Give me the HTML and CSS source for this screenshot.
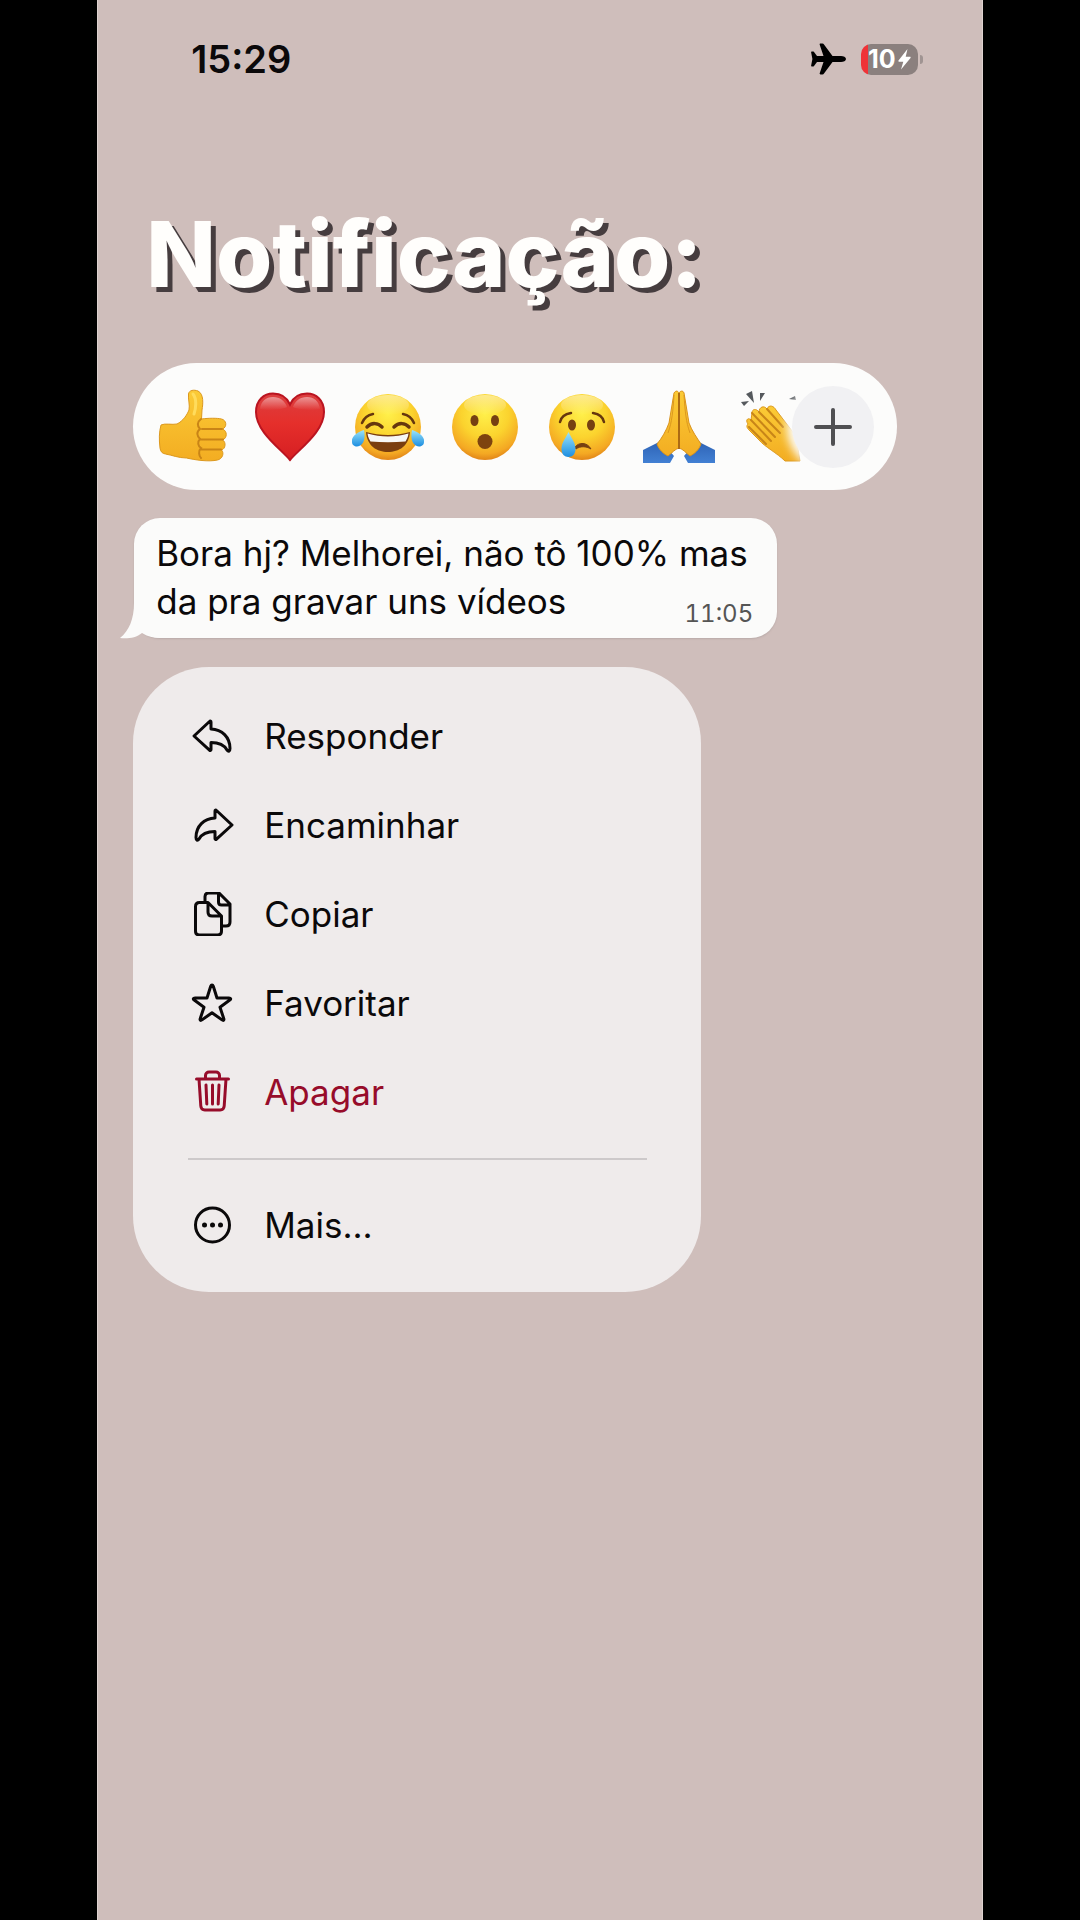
FILE: index.html
```
<!DOCTYPE html>
<html lang="pt-BR">
<head>
<meta charset="utf-8">
<meta name="viewport" content="width=device-width, initial-scale=1">
<title>Notificação</title>
<link rel="stylesheet" href="styles.css">
</head>
<body>
<main class="screen">
  <header class="status">
    <time class="clock">15:29</time>
    <div class="indicators">
      <svg class="plane" viewBox="0 0 36 32" aria-label="Modo avião"><path d="M35 16c0 2-2.500 3-5 3h-8.500L13 30.500c-.4.600-.8 1-1.500 1H9.500c-.7 0-1-.5-.8-1.200L12.500 19H6l-3 4c-.3.400-.6.500-1 .5H.800c-.5 0-.8-.3-.7-.8L1.400 16 .1 9.300C0 8.800.3 8.500.8 8.500H2c.4 0 .7.100 1 .5l3 4h6.500L8.700 1.700C8.500 1 8.800.5 9.500.5h2c.7 0 1.100.4 1.500 1L21.500 13H30c2.500 0 5 1 5 3z"/></svg>
      <div class="battery">
        <span class="level">10</span>
        <svg class="bolt" viewBox="0 0 13 21" aria-hidden="true"><path d="M9.500 0 .5 11.500c-.4.600-.1 1.200.6 1.200h4.200L3 20.500 12.500 9c.4-.6.100-1.200-.6-1.200H7.700z"/></svg>
      </div>
    </div>
  </header>

  <h1 class="title">Notificação:</h1>

  <section class="reactions" aria-label="Reações">
    <svg class="defs" width="0" height="0" aria-hidden="true">
      <defs>
        <radialGradient id="face" cx=".5" cy=".3" r=".72"><stop offset="0" stop-color="#fff04a"/><stop offset=".5" stop-color="#fbd32e"/><stop offset=".84" stop-color="#f4a823"/><stop offset="1" stop-color="#dd7e16"/></radialGradient>
        <linearGradient id="shine" x2="0" y2="1"><stop offset="0" stop-color="#fff" stop-opacity=".45"/><stop offset="1" stop-color="#fff" stop-opacity="0"/></linearGradient>
        <linearGradient id="heart" x2="0" y2="1"><stop offset="0" stop-color="#dc3f40"/><stop offset=".45" stop-color="#e52f2b"/><stop offset="1" stop-color="#d61e22"/></linearGradient>
        <linearGradient id="skin" x2="0" y2="1"><stop offset="0" stop-color="#fbcb36"/><stop offset="1" stop-color="#f3ad22"/></linearGradient>
        <linearGradient id="tear" x2="0" y2="1"><stop offset="0" stop-color="#9be4fb"/><stop offset="1" stop-color="#1c8ee0"/></linearGradient>
        <linearGradient id="sleeve" x2="0" y2="1"><stop offset="0" stop-color="#2d62b4"/><stop offset="1" stop-color="#4280d3"/></linearGradient>
      </defs>
    </svg>
    <button class="emoji" type="button" aria-label="Gostei">
      <svg viewBox="0 0 72 76">
        <path d="M3 36c4-2 11 0 16-1 6-3 10-9 12-14 1-5-1-11-.5-16C31 1 36 .5 40 2c6 3 5 13 4 19l-.5 9c7-1 16-1 20 0 5 1 6 8 1 10 5 2 5 9 0 11 4 2 3 9-1 10 3 3 1 9-4 10-9 2-22 0-31-2-8 0-15-3-21-4-3-.5-5-2-5.500-6-1-8-1-16 1-23z" fill="url(#skin)" stroke="#dc981d"/>
        <path d="M43 30c-4 3-4 7-1 10-4 3-3 7 0 10-3 3-2 7 1 9-3 3-2 8 0 10M44 40h20M43 50.500h22M43 60.500h20" fill="none" stroke="#c98416" stroke-width="2" stroke-linecap="round"/>
        <path d="M35 5c4 5 3 14 1 20" fill="none" stroke="#ffdc5c" stroke-width="3" stroke-linecap="round"/>
      </svg>
    </button>
    <button class="emoji" type="button" aria-label="Coração">
      <svg viewBox="0 0 72 76">
        <path d="M35 71C26 60 1 43 1 23 1 11 9 4.500 18 4.500c8 0 14 4 17 11 3-7 9-11 17-11 9 0 17 6.500 17 18.500 0 20-25 37-34 48z" fill="url(#heart)" stroke="#ba1420" stroke-width="2"/>
        <path d="M5 20C6 12 11 8 18 8c7 0 12 4 14 10-6 3-20 4-27 2zM65 20C64 12 59 8 52 8c-7 0-12 4-14 10 6 3 20 4 27 2z" fill="url(#shine)"/>
      </svg>
    </button>
    <button class="emoji" type="button" aria-label="Rindo">
      <svg viewBox="0 0 72 76">
        <circle cx="36" cy="38" r="33" fill="url(#face)"/><ellipse cx="36" cy="16" rx="21" ry="10" fill="url(#shine)"/>
        <path d="M10 34c2-5 6-8 11-9M62 34c-2-5-6-8-11-9" fill="none" stroke="#66370e" stroke-width="2.500" stroke-linecap="round"/>
        <path d="M15 38c5-5 11-4 15 0M42 38c5-5 11-4 15 0" fill="none" stroke="#66370e" stroke-width="3.500" stroke-linecap="round"/>
        <path d="M14 43c14 4 30 4 44 0-1 14-11 20-22 20S15 57 14 43z" fill="#7a3e0f"/>
        <path d="M15.500 44.500c13 4 28 4 41 0-.5 4-2 6-3 8-12 1-23 1-35 0-1-2-2.500-4-3-8z" fill="#f7f7f5"/>
        <path d="M12 41c-7 2-13 7-12 12 0 5 7 6 10 2 3-3 3-10 2-14zM60 41c7 2 13 7 12 12 0 5-7 6-10 2-3-3-3-10-2-14z" fill="url(#tear)"/>
      </svg>
    </button>
    <button class="emoji" type="button" aria-label="Surpreso">
      <svg viewBox="0 0 72 76">
        <circle cx="36" cy="38" r="33" fill="url(#face)"/><ellipse cx="36" cy="16" rx="21" ry="10" fill="url(#shine)"/>
        <ellipse cx="25.500" cy="31.500" rx="4" ry="5.500" fill="#754012"/><ellipse cx="46" cy="31.500" rx="4" ry="5.500" fill="#754012"/>
        <circle cx="36" cy="52.500" r="7.500" fill="#7e430f"/>
      </svg>
    </button>
    <button class="emoji" type="button" aria-label="Triste">
      <svg viewBox="0 0 72 76">
        <circle cx="36" cy="38" r="33" fill="url(#face)"/><ellipse cx="36" cy="16" rx="21" ry="10" fill="url(#shine)"/>
        <path d="M14 33c1-5 5-8 11-9M58 33c-1-5-5-8-11-9" fill="none" stroke="#66370e" stroke-width="2.500" stroke-linecap="round"/>
        <ellipse cx="26" cy="36" rx="4" ry="5.500" fill="#754012"/><ellipse cx="45" cy="36" rx="4" ry="5.500" fill="#754012"/>
        <path d="M29 58c4-5 12-5 16 2-5-3-11-3-15 0z" fill="#754012" stroke="#754012" stroke-linejoin="round"/>
        <path d="M22.500 43c4 8 7 11 7 17 0 5-3 8-7 8s-7-3-7-8c0-6 3-9 7-17z" fill="url(#tear)"/>
      </svg>
    </button>
    <button class="emoji" type="button" aria-label="Mãos juntas">
      <svg viewBox="0 0 72 76">
        <path d="M0 61 18 52 31 67 27 74H0zM72 61 54 52 41 67 45 74H72z" fill="url(#sleeve)"/>
        <path d="M31 4c2-3 4-2 5 0 1-2 4-3 5 0 2 10 3 20 5 30 3 8 8 15 12 21-2 6-7 10-11 12-4-3-7-7-11-8-4 1-7 5-11 8-4-2-9-6-11-12 5-6 9-13 12-21 2-10 3-20 5-30z" fill="url(#skin)" stroke="#d9921c"/>
        <path d="M36 4v56" stroke="#ad6b13" stroke-width="2"/>
        <path d="M31 6c-1 16-2 27-6 38M41 6c1 16 2 27 6 38" fill="none" stroke="#dc981d"/>
      </svg>
    </button>
    <button class="emoji" type="button" aria-label="Aplausos">
      <svg viewBox="0 0 72 76">
        <path d="M1 13 9 12 4 17zM6 5 12 2 14 14zM20 4 25 4 20 12zM49 10l6-3 1 4z" fill="#55595d"/>
        <path d="M8 35c-3-4 0-7 3-4l1-7c0-4 4-5 7-1 0-5 5-7 8-3 2-5 7-3 9 1l20 26 4 25H45c-8-8-20-14-26-21L9 41c-2-2-3-4-1-6z" fill="url(#skin)" stroke="#dc981d"/>
        <path d="M11 31 31 52M12 24 35 48M19 23 40 44M27 20 43 38M9 38 26 55" fill="none" stroke="#c88518" stroke-width="2" stroke-linecap="round"/>
      </svg>
    </button>
    <button class="more-reactions" type="button" aria-label="Mais reações">
      <svg viewBox="0 0 38 38"><path d="M19 2v34M2 19h34" fill="none" stroke="#4f4f52" stroke-width="4" stroke-linecap="round"/></svg>
    </button>
  </section>

  <article class="bubble">
    <svg class="tail" viewBox="0 0 44 46" aria-hidden="true"><path d="M14 0v10C14 26 9 38 0 45c7 1 16 0 22-5 6 4 12 5 22 5V0z"/></svg>
    <div class="message">Bora hj? Melhorei, não tô 100% mas da pra gravar uns vídeos <time class="sent">11:05</time></div>
  </article>

  <nav class="menu" aria-label="Ações da mensagem">
    <button class="item" type="button">
      <svg class="icon" viewBox="0 0 44 44"><path d="M4 22 19.500 7.500c.7-.7 1.500-.4 1.500.6V15c11 .5 19 8 19 19.500 0 3-1.500 3.500-3 1.500-3-5.500-8-7.500-16-7.500v7c0 1-.8 1.300-1.500.6z"/></svg>
      <span>Responder</span>
    </button>
    <button class="item" type="button">
      <svg class="icon" viewBox="0 0 44 44"><path d="M42 22 26.500 7.500c-.7-.7-1.500-.4-1.500.6V15C14 15.500 6 23 6 34.500c0 3 1.500 3.500 3 1.500 3-5.500 8-7.500 16-7.500v7c0 1 .8 1.300 1.500.6z"/></svg>
      <span>Encaminhar</span>
    </button>
    <button class="item" type="button">
      <svg class="icon" viewBox="0 0 44 44"><path d="M15 10V4.500C15 2 16.500 1 18.500 1H29l11 11v18c0 2.500-1.500 4-4 4h-4M28.500 1v9c0 2 1 3 3 3H40M9.500 10.500H18L31.500 24v15c0 2.500-1.500 4-4 4h-18C7 43 5.500 41.500 5.500 39V14.500c0-2.500 1.500-4 4-4zM18 10.500V20c0 2.500 1.500 4 4 4h9.500"/></svg>
      <span>Copiar</span>
    </button>
    <button class="item" type="button">
      <svg class="icon" viewBox="0 0 44 44"><path d="M22 4c.7 0 1 .4 1.300 1.200L27 17h12c1.800 0 2.200 1 .8 2L30 26.200l3.800 11.500c.5 1.600-.4 2.200-1.800 1.200L22 31.800l-10 7.100c-1.400 1-2.300.4-1.800-1.200L14 26.200 4.200 19c-1.400-1-1-2 .8-2h12L20.700 5.200C21 4.400 21.300 4 22 4z"/></svg>
      <span>Favoritar</span>
    </button>
    <button class="item danger" type="button">
      <svg class="icon" viewBox="0 0 44 44"><path d="M6.500 9h32M15.500 9V5.500c0-2 1.500-3.500 3.500-3.500h7c2 0 3.500 1.500 3.500 3.500V9M9 9l1.800 27c.2 2.500 1.500 4 4 4h15.400c2.500 0 3.800-1.500 4-4L36 9M16 15l.8 19M22.500 15v19M29 15l-.8 19"/></svg>
      <span>Apagar</span>
    </button>
    <hr class="divider">
    <button class="item" type="button">
      <svg class="icon" viewBox="0 0 44 44"><circle cx="22.500" cy="22" r="17"/><g class="dots"><circle cx="14.500" cy="22" r="2.500"/><circle cx="22.500" cy="22" r="2.500"/><circle cx="30.500" cy="22" r="2.500"/></g></svg>
      <span>Mais...</span>
    </button>
  </nav>
</main>
</body>
</html>
```
FILE: styles.css
```
* {
  box-sizing: border-box;
}

body {
  margin: 0;
  background: #000;
  color: #0b090a;
  font-family: Inter, "Liberation Sans", sans-serif;
}

button {
  margin: 0;
  padding: 0;
  border: 0;
  background: none;
  color: inherit;
  font: inherit;
  text-align: left;
}

.screen {
  width: 82%;
  min-height: 100vh;
  margin: 0 auto;
  padding: 36px 35px;
  border: solid #ded2d0;
  border-width: 0 1px;
  background: #cfbebb;
}

.status {
  display: flex;
  align-items: center;
  justify-content: space-between;
  height: 46px;
  padding: 0 29px 0 58px;
}

.clock {
  font-size: 38px;
  font-weight: 600;
  line-height: 46px;
}

.indicators {
  display: flex;
  align-items: center;
  gap: 14px;
}

.plane {
  width: 36px;
  height: 32px;
}

.battery {
  position: relative;
  display: flex;
  align-items: center;
  justify-content: center;
  gap: 2px;
  width: 57px;
  height: 31px;
  border-radius: 10px;
  background: linear-gradient(90deg, #ef3337 7px, #8b807e 7px);
  color: #fff;
}

.battery::after {
  content: "";
  position: absolute;
  left: 59px;
  width: 3px;
  height: 9px;
  border-radius: 0 4px 4px 0;
  background: #a09492;
}

.level {
  font-size: 25px;
  font-weight: 700;
  line-height: 31px;
}

.bolt {
  width: 13px;
  height: 21px;
  fill: #fff;
}

.title {
  margin: 117px 0 0 13px;
  color: #fffefc;
  font-size: 91px;
  font-weight: 800;
  line-height: 110px;
  text-shadow: 5px 5px #463d3f;
}

.reactions {
  position: relative;
  display: flex;
  align-items: center;
  gap: 25px;
  max-width: 764px;
  height: 127px;
  margin-top: 54px;
  padding-left: 25px;
  border-radius: 64px;
  background: #fcfcfb;
}

.defs {
  position: absolute;
}

.emoji {
  flex: none;
  width: 72px;
  height: 76px;
}

.emoji svg {
  display: block;
  width: 100%;
  height: 100%;
}

.more-reactions {
  position: absolute;
  right: 23px;
  display: flex;
  align-items: center;
  justify-content: center;
  width: 82px;
  height: 82px;
  border-radius: 50%;
  background: #f1f1f3;
  box-shadow: 0 0 10px 5px #fcfcfb;
}

.more-reactions svg {
  width: 38px;
  height: 38px;
}

.bubble {
  position: relative;
  max-width: 643px;
  margin: 28px 0 0 1px;
  padding: 11px 24px 13px 22px;
  border-radius: 26px;
  background: #fbfbfa;
  box-shadow: 0 1px 2px #b9aaa8;
}

.tail {
  position: absolute;
  left: -14px;
  bottom: -1px;
  width: 44px;
  height: 46px;
  fill: #fbfbfa;
}

.message {
  position: relative;
  font-size: 35px;
  line-height: 48px;
}

.sent {
  float: right;
  margin-top: 26px;
  color: #555;
  font-size: 24px;
  font-optical-sizing: none;
  font-variant-numeric: tabular-nums;
  line-height: 22px;
}

.menu {
  max-width: 568px;
  margin-top: 29px;
  padding: 24px 54px 23px 55px;
  border-radius: 76px;
  background: #efebeb;
}

.item {
  display: flex;
  align-items: center;
  gap: 30px;
  width: 100%;
  height: 89px;
  padding-left: 2px;
  font-size: 35px;
  line-height: 44px;
}

.icon {
  flex: none;
  width: 44px;
  height: 44px;
  fill: none;
  stroke: currentColor;
  stroke-width: 3;
  stroke-linecap: round;
  stroke-linejoin: round;
}

.dots {
  fill: currentColor;
  stroke: none;
}

.danger {
  color: #970c2a;
}

.divider {
  height: 2px;
  margin: 22px 0 20px;
  border: 0;
  background: #cdc9ca;
}
```
